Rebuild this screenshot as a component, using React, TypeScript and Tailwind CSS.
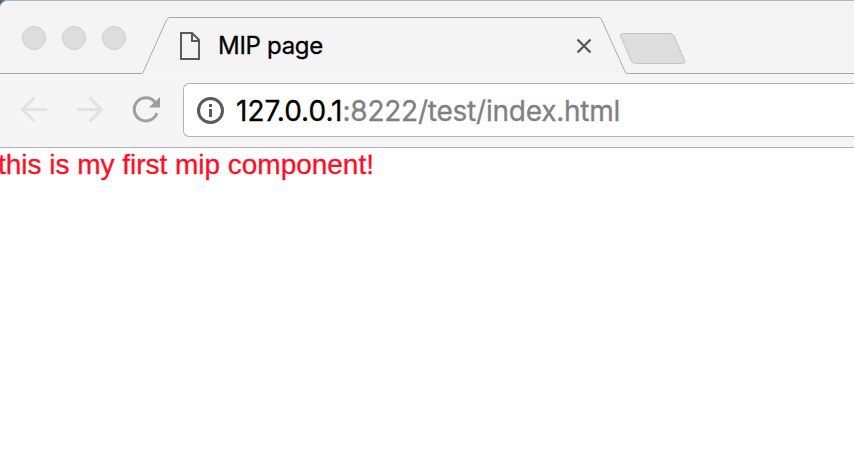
import React from "react";

function TabStrip() {
  return (
    <div className="relative h-[74px] bg-[#f4f4f4]">
      <svg className="absolute inset-0" width="854" height="74" viewBox="0 0 854 74" fill="none">
        <path d="M0 0H7Q2 1 0 6Z" fill="#50687c" />
        <path d="M0 6Q2 .5 8 .5H854" stroke="#b6b6b6" />
        <path d="M0 73.5H141Q142.500 73.500 143 72.500L166.500 20Q168 17.500 169.500 17.500H598.500Q600.500 17.500 601.500 19.500L625 71.500Q626 73.500 627.500 73.500H854" stroke="#a9a9a9" />
        <path d="M623.500 33.500H670Q673 33.500 674.500 36.500L684.500 60.500Q685.500 63.500 682.500 63.500H635.500Q632.500 63.500 631 60.500L620.500 36Q619.500 33.500 623.500 33.500Z" fill="#dddddd" stroke="#c3c3c3" />
      </svg>
      <div className="flex h-[74px] items-start">
        <div className="flex gap-4 pl-[22px] pt-[26px]">
          <span className="size-6 rounded-full border border-[#cecece] bg-[#dddddd]" />
          <span className="size-6 rounded-full border border-[#cecece] bg-[#dddddd]" />
          <span className="size-6 rounded-full border border-[#cecece] bg-[#dddddd]" />
        </div>
        <svg className="ml-[54px] mt-8 shrink-0" width="20" height="28" viewBox="0 0 20 28" fill="none" stroke="#5a5a5a" strokeWidth="2">
          <path d="M1 1H12L19 8V27H1Z" />
          <path d="M12 1V9H19" />
        </svg>
        <span className="ml-[18px] mt-[30px] w-[358px] whitespace-nowrap font-['Inter',sans-serif] text-[24px] leading-8 tracking-[-0.3px] text-black [-webkit-text-stroke:0.3px_currentColor]">MIP page</span>
        <svg className="mt-[38px] shrink-0" width="16" height="16" viewBox="0 0 16 16" stroke="#5a5a5a" strokeWidth="2.400">
          <path d="M1.500 1.500L14.500 14.500M14.500 1.500L1.500 14.500" />
        </svg>
      </div>
    </div>
  );
}

function Toolbar() {
  return (
    <div className="flex h-[74px] items-start border-b border-[#b3b3b3] bg-[#f5f5f5]">
      <svg className="shrink-0" width="183" height="73" viewBox="0 0 183 73" fill="none">
        <g stroke="#e2e2e2" strokeWidth="3">
          <path d="M47 35.500H23M34.500 23.500L22.500 35.500L34.500 47.500" />
          <path d="M77 35.500H101M89.500 23.500L101.500 35.500L89.500 47.500" />
        </g>
        <path d="M155 28.200A11.600 11.600 0 1 0 156.900 39" stroke="#a0a0a0" strokeWidth="3" />
        <path d="M160 23V33.500H149Z" fill="#9c9c9c" />
      </svg>
      <div className="mt-[9px] flex h-[54px] flex-1 items-center rounded-l-[6px] border border-r-0 border-[#b3b3b3] bg-white pl-[13px]">
        <svg className="shrink-0" width="27" height="27" viewBox="0 0 27 27" fill="none">
          <circle cx="13.500" cy="13.500" r="12" stroke="#5a5a5a" strokeWidth="3" />
          <path d="M12 7H15V10H12ZM12 12H15V20H12Z" fill="#5a5a5a" />
        </svg>
        <span className="ml-3 mt-0.5 whitespace-nowrap font-['Inter',sans-serif] text-[28px] leading-9 text-[#808080] [-webkit-text-stroke:0.3px_currentColor]">
          <span className="tracking-[0px] text-black">127.0.0.1</span><span className="tracking-[-0.23px]">:8222/test/index.html</span>
        </span>
      </div>
    </div>
  );
}

export default function App() {
  return (
    <div className="h-[452px] w-[854px] overflow-hidden bg-white">
      <TabStrip />
      <Toolbar />
      <p className="-ml-0.5 mt-px whitespace-nowrap font-['Liberation_Sans',Arial,sans-serif] text-[28px] leading-8 tracking-[-0.02px] text-[#ff0d25] [-webkit-text-stroke:0.3px_currentColor]">this is my first mip component!</p>
    </div>
  );
}
